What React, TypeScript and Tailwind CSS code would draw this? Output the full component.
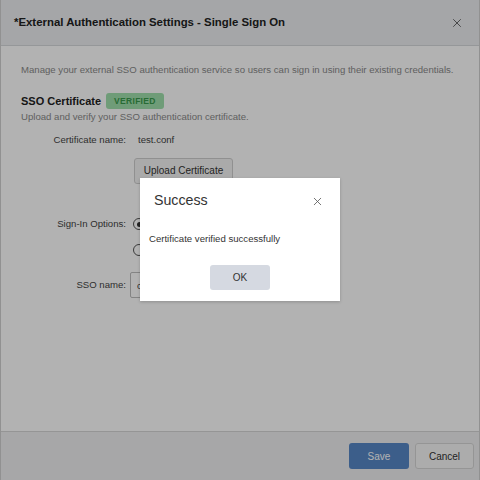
import { X } from 'lucide-react';

function Radio({ checked }: { checked?: boolean }) {
  return (
    <span className="flex h-[12px] w-[12px] shrink-0 items-center justify-center rounded-full border border-[#555] bg-white">
      {checked && <span className="h-[5px] w-[5px] rounded-full bg-[#333]" />}
    </span>
  );
}

export default function App() {
  return (
    <div className="relative h-[480px] w-[480px] overflow-hidden bg-white font-['Liberation_Sans',Arial,sans-serif] text-[#333]">
      <div className="flex h-full flex-col border-x border-[#d0d0d0]">
        <div className="flex h-[46px] shrink-0 items-center justify-between border-b border-[#d6d8dc] bg-[#eceef1] pl-[13px] pr-[15px]">
          <h1 className="text-[11.4px] font-bold text-[#222]">*External Authentication Settings - Single Sign On</h1>
          <X className="h-[14px] w-[14px] text-[#555]" strokeWidth={1.5} />
        </div>

        <div className="flex-1 px-[20px] pt-[18px] text-[9.6px] leading-[12px]">
          <p className="whitespace-nowrap text-[#8a8a8a]">Manage your external SSO authentication service so users can sign in using their existing credentials.</p>

          <div className="mt-[17px] flex h-[16px] items-center gap-[5px]">
            <span className="text-[11px] font-bold text-[#222]">SSO Certificate</span>
            <span className="flex h-[16px] items-center rounded-[3px] bg-[#a0e0ad] px-[8px] text-[8.5px] font-bold tracking-[0.3px] text-[#3a9a4c]">VERIFIED</span>
          </div>
          <p className="mt-[2px] text-[#8a8a8a]">Upload and verify your SSO authentication certificate.</p>

          <div className="mt-[11px] flex items-center">
            <span className="w-[105px] text-right text-[#444]">Certificate name:</span>
            <span className="ml-[12px] text-[#444]">test.conf</span>
          </div>

          <div className="mt-[12px] flex">
            <span className="w-[105px]" />
            <button className="ml-[8px] h-[26px] w-[99px] rounded-[3px] border border-[#cfcfcf] bg-[#f4f4f4] text-[10px] text-[#333]">Upload Certificate</button>
          </div>

          <div className="mt-[34px] flex items-start">
            <span className="w-[105px] text-right text-[#444]">Sign-In Options:</span>
            <div className="ml-[7px] flex flex-col gap-[14px]">
              <div className="flex h-[12px] items-center gap-[6px]">
                <Radio checked />
                <span>Use SSO authentication</span>
              </div>
              <div className="flex h-[12px] items-center gap-[6px]">
                <Radio />
                <span>Use local authentication</span>
              </div>
            </div>
          </div>

          <div className="mt-[16px] flex items-center">
            <span className="w-[105px] text-right text-[#444]">SSO name:</span>
            <input defaultValue="company-sso" className="ml-[4px] h-[26px] w-[195px] rounded-[2px] border border-[#bdbdbd] bg-white px-[6px] text-[9.6px] text-[#444]" />
          </div>
        </div>

        <div className="flex h-[49px] shrink-0 items-center justify-end gap-[6px] border-t border-[#d6d6d6] bg-[#f0f0f1] pr-[5px]">
          <button className="h-[26px] w-[60px] rounded-[3px] bg-[#5787c6] text-[10px] text-white">Save</button>
          <button className="h-[26px] w-[59px] rounded-[3px] border border-[#d6d6d6] bg-[#f7f7f7] text-[10px] text-[#333]">Cancel</button>
        </div>
      </div>

      <div className="absolute inset-0 bg-black/30" />

      <div className="absolute left-[140px] top-[178px] flex h-[123px] w-[200px] flex-col bg-white shadow-[0_1px_3px_rgba(0,0,0,0.2)]">
        <div className="mt-[15px] flex h-[16px] items-center justify-between pl-[14px] pr-[16px]">
          <span className="text-[14.2px] text-[#333]">Success</span>
          <X className="h-[13px] w-[13px] text-[#555]" strokeWidth={1.5} />
        </div>
        <p className="mt-[24px] pl-[9px] text-[9.6px] leading-[12px] text-[#333]">Certificate verified successfully</p>
        <div className="mt-[20px] flex justify-center">
          <button className="h-[25px] w-[60px] rounded-[3px] bg-[#d5d9e1] text-[10px] text-[#333]">OK</button>
        </div>
      </div>
    </div>
  );
}
